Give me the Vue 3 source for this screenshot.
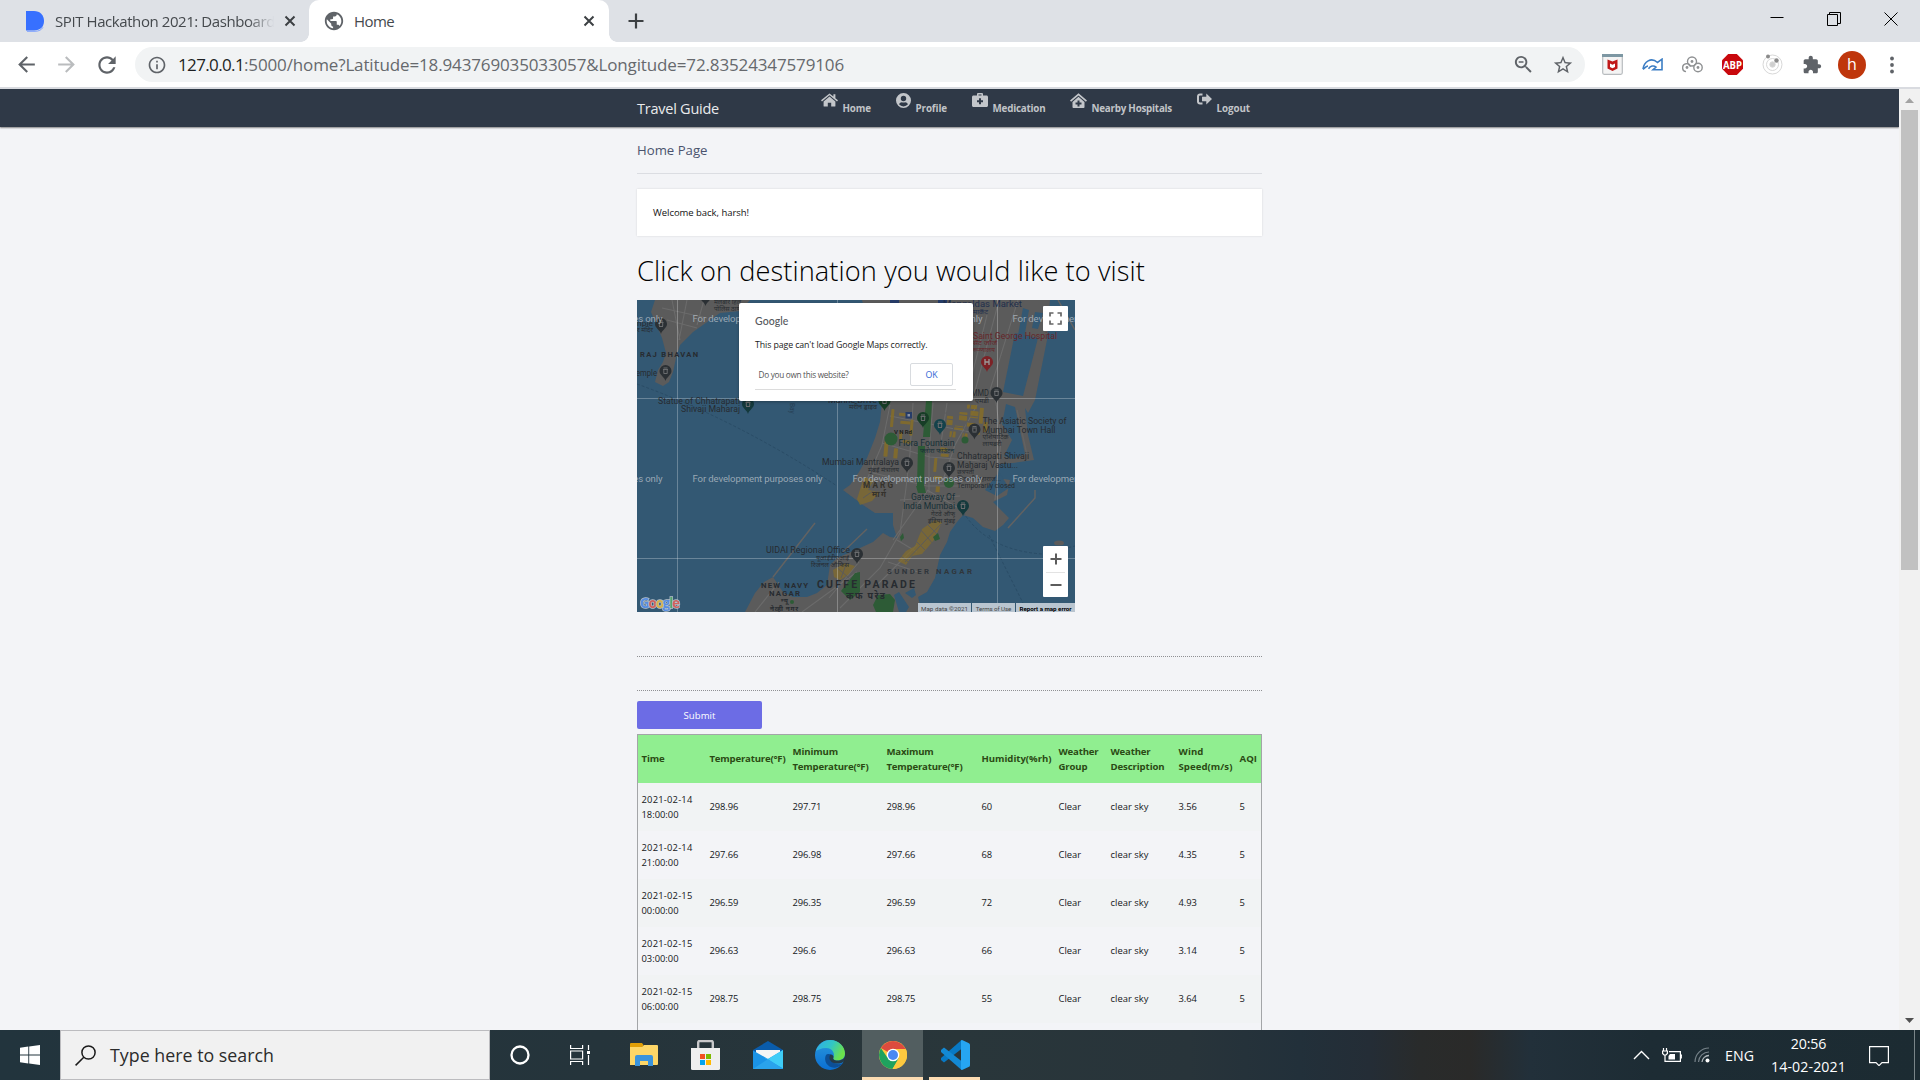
<script setup>
// Spreads a label's letters so that it takes the given width in pixels.
const fit = (el, { value }) => {
  if (!value) return
  el.style.letterSpacing = '0px'
  const count = el.textContent.trim().length
  const natural = el.getBoundingClientRect().width
  el.style.letterSpacing = `${(value - natural) / count}px`
}
const vFit = { mounted: fit, updated: fit }

const icons = {
  back: 'M20 11H7.83l5.59-5.59L12 4l-8 8 8 8 1.41-1.41L7.83 13H20v-2z',
  forward: 'M4 11h12.17l-5.59-5.59L12 4l8 8-8 8-1.41-1.41L16.17 13H4v-2z',
  reload: 'M17.65 6.35C16.2 4.9 14.21 4 12 4c-4.42 0-7.99 3.58-7.99 8s3.57 8 7.99 8c3.73 0 6.84-2.55 7.73-6h-2.08c-.82 2.33-3.04 4-5.65 4-3.31 0-6-2.69-6-6s2.69-6 6-6c1.66 0 3.14.69 4.22 1.78L13 11h7V4l-2.35 2.35z',
  info: 'M11 7h2v2h-2zm0 4h2v6h-2zm1-9C6.48 2 2 6.48 2 12s4.48 10 10 10 10-4.48 10-10S17.52 2 12 2zm0 18c-4.41 0-8-3.59-8-8s3.59-8 8-8 8 3.59 8 8-3.59 8-8 8z',
  globe: 'M12 2C6.48 2 2 6.48 2 12s4.48 10 10 10 10-4.48 10-10S17.52 2 12 2zm-1 17.93c-3.95-.49-7-3.85-7-7.93 0-.62.08-1.21.21-1.79L9 15v1c0 1.1.9 2 2 2v1.93zm6.9-2.54c-.26-.81-1-1.39-1.9-1.39h-1v-3c0-.55-.45-1-1-1H8v-2h2c.55 0 1-.45 1-1V7h2c1.1 0 2-.9 2-2v-.41c2.93 1.19 5 4.06 5 7.41 0 2.08-.8 3.97-2.1 5.39z',
  zoomOut: 'M15.5 14h-.79l-.28-.27C15.41 12.59 16 11.11 16 9.5 16 5.91 13.09 3 9.5 3S3 5.91 3 9.5 5.91 16 9.5 16c1.61 0 3.09-.59 4.23-1.57l.27.28v.79l5 4.99L20.49 19l-4.99-5zm-6 0C7.01 14 5 11.99 5 9.5S7.01 5 9.5 5 14 7.01 14 9.5 11.99 14 9.5 14zM7 8.6h5v1.6H7z',
  star: 'M22 9.24l-7.19-.62L12 2 9.19 8.63 2 9.24l5.46 4.73L5.82 21 12 17.27 18.18 21l-1.63-7.03L22 9.24zM12 15.4l-3.76 2.27 1-4.28-3.32-2.88 4.38-.38L12 6.1l1.71 4.04 4.38.38-3.32 2.88 1 4.28L12 15.4z',
  puzzle: 'M20.5 11H19V7c0-1.1-.9-2-2-2h-4V3.5C13 2.12 11.88 1 10.5 1S8 2.12 8 3.5V5H4c-1.1 0-1.99.9-1.99 2v3.8H3.5c1.49 0 2.7 1.21 2.7 2.7s-1.21 2.7-2.7 2.7H2V20c0 1.1.9 2 2 2h3.8v-1.5c0-1.49 1.21-2.7 2.7-2.7 1.49 0 2.7 1.21 2.7 2.7V22H17c1.1 0 2-.9 2-2v-4h1.5c1.38 0 2.5-1.12 2.5-2.5S21.88 11 20.5 11z',
}

const nav = [
  { label: 'Home', w: 28.5, iw: 17, d: 'M8.5 3.6 2.6 8.5V13c0 .4.2.6.6.6h3.6V9.8h3.4v3.8h3.6c.4 0 .6-.2.6-.6V8.5zM8.5.4 0 7.3l1 1.2 7.5-6.2L16 8.5l1-1.2-2.6-2.1V1.2h-2v2.3z' },
  { label: 'Profile', w: 31.5, iw: 15, d: 'M7.5 0a7.5 7.5 0 1 0 0 15 7.5 7.5 0 0 0 0-15zm0 2.8a2.7 2.7 0 1 1 0 5.4 2.7 2.7 0 0 1 0-5.4zM3 11.3c.6-1.4 1.7-2.1 2.8-2.1.5.2 1.1.3 1.7.3s1.2-.1 1.7-.3c1.1 0 2.2.7 2.8 2.1a5.9 5.9 0 0 1-9 0z' },
  { label: 'Medication', w: 53, iw: 16, d: 'M5 2.5V1.2C5 .5 5.5 0 6.2 0h3.6c.7 0 1.2.5 1.2 1.2v1.3h3.5c.8 0 1.5.7 1.5 1.5v8.5c0 .8-.7 1.5-1.5 1.5h-13C.7 14 0 13.3 0 12.5V4c0-.8.7-1.5 1.5-1.5zm1.5 0h3v-1h-3zM7 5.2v2H5v2h2v2h2v-2h2v-2H9v-2z' },
  { label: 'Nearby Hospitals', w: 80.5, iw: 16.5, d: 'M8.5 3.8 2.5 8.9v5.2c0 .5.3.9.8.9h10.4c.5 0 .8-.4.8-.9V8.9zM7.5 7.5h2v2h2v2h-2v2h-2v-2h-2v-2h2zM8.5.3 0 7.6l1.1 1.2 7.4-6.4 7.4 6.4L17 7.6z' },
  { label: 'Logout', w: 33.5, iw: 15, d: 'M5.5 1.5H3C1.3 1.5 0 2.8 0 4.3v5.4c0 1.5 1.3 2.8 3 2.8h2.5v-2H3c-.6 0-1-.4-1-.9V4.4c0-.5.4-.9 1-.9h2.5zM9.3 1.5 15 7l-5.7 5.5V9.2H5V4.8h4.3z' },
]

const cols = [68, 83, 94, 95, 77, 52, 68, 61, 25]
const heads = [
  [['Time', 23]],
  [['Temperature(°F)', 76]],
  [['Minimum', 45.5], ['Temperature(°F)', 76]],
  [['Maximum', 47], ['Temperature(°F)', 76]],
  [['Humidity(%rh)', 70]],
  [['Weather', 40], ['Group', 29]],
  [['Weather', 40], ['Description', 54]],
  [['Wind', 25], ['Speed(m/s)', 54]],
  [['AQI', 17.5]],
]
const num = (s) => [[s, s.replace('.', '').length * 5.25 + (s.includes('.') ? 2.6 : 0)]]
const row = (day, time, t, lo, hi, hum, wind) => [
  [[day, 51], [time, 37]],
  num(t), num(lo), num(hi), num(hum), [['Clear', 22.5]], [['clear sky', 38]], num(wind), num('5'),
]
const rows = [
  row('2021-02-14', '18:00:00', '298.96', '297.71', '298.96', '60', '3.56'),
  row('2021-02-14', '21:00:00', '297.66', '296.98', '297.66', '68', '4.35'),
  row('2021-02-15', '00:00:00', '296.59', '296.35', '296.59', '72', '4.93'),
  row('2021-02-15', '03:00:00', '296.63', '296.6', '296.63', '66', '3.14'),
  row('2021-02-15', '06:00:00', '298.75', '298.75', '298.75', '55', '3.64'),
]

// Map labels: text, x, baseline, width, colour, size, weight
const ink = '#272b30'
const labels = [
  ['RAJ BHAVAN', 3, 57, 58, ink, 7.6, 700],
  ['nple', 0, 26, 16, ink, 8, 400],
  ['emple', -1, 75.5, 21, ink, 8.5, 400],
  ['र मंदिर', 0, 32, 16, ink, 6, 400],
  ['मलबार हिल', 77, 4, 27, ink, 6, 400],
  ['पोलिस ठाणे', 77, 11, 27, ink, 6, 400],
  ['Statue of Chhatrapati', 21, 103.5, 82, ink, 8.6, 400],
  ['Shivaji Maharaj', 44, 112, 59, ink, 8.6, 400],
  ['Marine Drive', 191, 103, 49, ink, 8, 400],
  ['मरीन ड्राइव', 212, 109, 28, ink, 6.5, 400],
  ['Mangaldas Market', 306, 7, 79, '#222f4c', 8.6, 400],
  ['मार्केट', 336, 13.5, 15, '#222f4c', 6, 400],
  ['Saint George Hospital', 336, 38.5, 84, '#65262a', 8.4, 400],
  ['सेंट जॉर्ज', 336, 45, 24, '#65262a', 6, 400],
  ['रूग्णालय', 336, 51.5, 22, '#65262a', 6, 400],
  ['MMD', 334, 96, 18, ink, 8.6, 400],
  ['एमडी', 338, 103, 14, ink, 6.5, 400],
  ['V N Rd', 257, 134, 18, '#1f1f1f', 6, 700],
  ['The Asiatic Society of', 345.5, 124, 84, ink, 8.6, 400],
  ['Mumbai Town Hall', 345.5, 132.5, 73, ink, 8.6, 400],
  ['एशियाटिक', 345.5, 139, 26, ink, 6, 400],
  ['लायब्ररी', 345.5, 146, 19, ink, 6, 400],
  ['Flora Fountain', 261.5, 145.5, 56, '#162f36', 8.6, 400],
  ['फ्लोरा फाउंटन', 283, 152.5, 34, '#162f36', 6, 400],
  ['Mumbai Mantralaya', 185, 165, 77, ink, 8.6, 400],
  ['मुंबई मंत्रालय', 231, 172, 31, ink, 6, 400],
  ['Chhatrapati Shivaji', 320, 158.5, 72, ink, 8.6, 400],
  ['Maharaj Vastu...', 320, 167.5, 61, ink, 8.6, 400],
  ['छत्रपती', 320, 173.5, 17, ink, 5.5, 400],
  ['शिवाजी महाराज...', 320, 181, 44, ink, 5.5, 400],
  ['Temporarily closed', 320, 188, 58, ink, 7, 400],
  ['MARG', 226, 187.5, 30, '#35322c', 8.2, 700],
  ['मार्ग', 235, 197, 14, '#35322c', 8, 700],
  ['Gateway Of', 274, 200, 44, '#162f36', 8.6, 400],
  ['India Mumbai', 266, 209, 52, '#162f36', 8.6, 400],
  ['गेटवे ऑफ', 294, 215.5, 24, ink, 6.5, 400],
  ['इंडिया मुंबई', 291, 222.5, 27, ink, 6.5, 400],
  ['UIDAI Regional Office', 129, 253, 84, ink, 8.6, 400],
  ['यूआईडीएआई', 179, 260, 33, ink, 6, 400],
  ['रिजनल ऑफिस', 174, 267, 38, ink, 6, 400],
  ['NEW NAVY', 124, 287.5, 47, ink, 7.8, 700],
  ['NAGAR', 132, 296, 31, ink, 7.8, 700],
  ['न्यू', 144, 303, 7, ink, 6.5, 700],
  ['नेव्ही नगर', 133, 310.5, 28, ink, 6.5, 700],
  ['CUFFE PARADE', 180, 288, 98, ink, 10.5, 700],
  ['कफ परेड', 209, 299, 39, ink, 9, 700],
  ['SUNDER NAGAR', 250, 273.5, 85, '#30363b', 7.8, 700],
]
const pins = [
  [24, 24, '#2b3034'], [28.5, 71, '#2b3034'], [68.5, -4, '#2b3034'], [111, 104, '#14393c'],
  [247.5, 101, '#173d26'], [286, 118, '#173d26'], [303, 125, '#14424b'], [337.5, 129.5, '#2b3034'],
  [350, 62, '#7d2226'], [359.5, 93, '#2b3034'], [270, 163, '#2b3034'], [312, 168, '#2b3034'],
  [326, 206, '#14393c'], [220, 254, '#2b3034'],
]
const yellow = [
  [260, 116, 10, 3], [252, 113, 3, 18], [262, 124, 10, 3], [272, 122, 3, 16], [258, 152, 4, 10], [248, 145, 4, 16],
  [266, 143, 8, 3], [327, 102, 10, 4], [320, 110, 8, 9], [331, 108, 8, 7], [340, 104, 4, 16], [316, 124, 9, 4],
  [328, 120, 9, 4], [312, 130, 6, 6], [299, 158, 3, 14], [305, 153, 8, 3], [304, 147, 7, 4], [300, 176, 8, 3],
  [308, 115, 6, 9], [345, 118, 4, 10], [325, 131, 5, 5], [303, 186, 4, 6], [262, 135, 3, 8], [336, 128, 6, 3],
]
const watermark = [-104.5, 55.5, 215.5, 375.5]
</script>

<template>
  <div class="screen">
    <header class="tabs">
      <div class="tab first">
        <svg class="fav" width="20" height="21" viewBox="0 0 20 21"><path d="M1 0h8c6 0 10 4 10 10s-4 9.500-10 9.500H1z" fill="#3770ff" /><path d="M2 20.300h8c4 0 6.500-1.500 8-4" fill="none" stroke="#7ea2ff" /></svg>
        <span class="tab-title faded"><span v-fit="220">SPIT Hackathon 2021: Dashboard</span></span>
        <svg class="x" width="12" height="12" viewBox="0 0 12 12"><path d="M1.500 1.500l9 9m0-9l-9 9" /></svg>
      </div>
      <div class="tab active">
        <svg width="22" height="22" viewBox="0 0 24 24" fill="#5f6368"><path :d="icons.globe" /></svg>
        <span class="tab-title"><span v-fit="40">Home</span></span>
        <svg class="x" width="12" height="12" viewBox="0 0 12 12"><path d="M1.500 1.500l9 9m0-9l-9 9" /></svg>
      </div>
      <svg class="plus" width="16" height="16" viewBox="0 0 16 16"><path d="M8 .5v15M.5 8h15" stroke="#3c4043" stroke-width="2.200" /></svg>
      <div class="win">
        <svg width="14" height="14"><path d="M.5 5.500h13" stroke="#000" /></svg>
        <svg width="14" height="14"><path d="M.5 2.500h10v11h-10zM2.500 2V.5h11v11H11" fill="none" stroke="#000" /></svg>
        <svg width="14" height="14"><path d="M.5.5l13 13m0-13l-13 13" stroke="#000" fill="none" /></svg>
      </div>
    </header>

    <div class="toolbar">
      <div class="nav-buttons">
        <svg width="25" height="25" viewBox="0 0 24 24" fill="#5f6368"><path :d="icons.back" /></svg>
        <svg width="25" height="25" viewBox="0 0 24 24" fill="#babcbe"><path :d="icons.forward" /></svg>
        <svg width="26" height="26" viewBox="0 0 24 24" fill="#5f6368"><path :d="icons.reload" /></svg>
      </div>
      <div class="omnibox">
        <svg width="20" height="20" viewBox="0 0 24 24" fill="#5f6368"><path :d="icons.info" /></svg>
        <span class="url"><span v-fit="66" class="host">127.0.0.1</span><span v-fit="600">:5000/home?Latitude=18.943769035033057&amp;Longitude=72.83524347579106</span></span>
        <div class="cell"><svg width="23" height="23" viewBox="0 0 24 24" fill="#5f6368"><path :d="icons.zoomOut" /></svg></div>
        <div class="cell"><svg width="22" height="22" viewBox="0 0 24 24" fill="#5f6368"><path :d="icons.star" /></svg></div>
      </div>
      <div class="exts">
        <div class="cell"><svg width="21" height="21" viewBox="0 0 21 21"><rect x=".7" y=".7" width="19.600" height="19.600" rx="1.500" fill="#f4f4f4" stroke="#b8bcbf" stroke-width="1.200" /><path d="M0 0h21v3H0z" fill="#7d97a3" /><path d="M5.500 5.500l5 2 5-2v9l-5 2.500-5-2.500z" fill="#c01818" /><path d="M8 9.500l2.500 1.300L13 9.500V13l-2.500 1.200L8 13z" fill="#fff" /></svg></div>
        <div class="cell"><svg width="21" height="13" viewBox="0 0 21 13" fill="none" stroke="#3b7dc4" stroke-width="1.600"><path d="M1 11.300C3 9.500 4.500 8 6 8M1 11C2 4 9-1.500 15.500 4.500L20 1.200v10.600h-9l3-2.800C11.500 7 8.500 8 6.500 10.800" /></svg></div>
        <div class="cell"><svg width="21" height="17" viewBox="0 0 21 17" fill="none" stroke="#8f9193" stroke-width="1.400"><circle cx="10" cy="5.500" r="4.500" /><circle cx="16" cy="11.500" r="4.200" /><path d="M4 15.600a4 4 0 1 1 4.500-5" /><g fill="#8f9193" stroke="none"><circle cx="10" cy="5.500" r="1.400" /><circle cx="16" cy="11.500" r="1.400" /><circle cx="5" cy="11.500" r="1.400" /></g></svg></div>
        <div class="cell"><svg width="21" height="21" viewBox="0 0 21 21"><path d="M6.200 0h8.600L21 6.200v8.600L14.800 21H6.200L0 14.800V6.200z" fill="#c9080d" /><text x="10.500" y="14.500" text-anchor="middle" textLength="19" lengthAdjust="spacingAndGlyphs" class="abp">ABP</text></svg></div>
        <div class="cell"><svg width="21" height="21" viewBox="0 0 21 21" fill="none" stroke="#d8d8d8"><circle cx="10.500" cy="10.500" r="9.500" /><circle cx="10.500" cy="10.500" r="6" /><circle cx="10.500" cy="10.500" r="2.700" fill="#cfcfcf" /><circle cx="6" cy="2.500" r="2" fill="#8a8a8a" stroke="none" /><circle cx="14.500" cy="6.500" r="2.200" fill="#8a8a8a" stroke="none" /></svg></div>
        <div class="cell"><svg width="20" height="20" viewBox="0 0 24 24" fill="#5f6368"><path :d="icons.puzzle" /></svg></div>
        <div class="cell"><span class="avatar">h</span></div>
        <div class="cell"><svg width="4" height="18" viewBox="0 0 4 18" fill="#5f6368"><circle cx="2" cy="2.500" r="1.900" /><circle cx="2" cy="9" r="1.900" /><circle cx="2" cy="15.500" r="1.900" /></svg></div>
      </div>
    </div>

    <div class="viewport">
      <div class="page">
        <nav class="navtop">
          <div class="wrap nav-row">
            <h1><span v-fit="82">Travel Guide</span></h1>
            <a v-for="n in nav" :key="n.label">
              <svg :width="n.iw" height="15" fill="#c3c6ca" fill-rule="evenodd"><path :d="n.d" /></svg>
              <span v-fit="n.w">{{ n.label }}</span>
            </a>
          </div>
        </nav>
        <main class="wrap">
          <h2><span v-fit="70.500">Home Page</span></h2>
          <p class="welcome"><span v-fit="96">Welcome back, harsh!</span></p>
          <h3><span v-fit="508">Click on destination you would like to visit</span></h3>

          <div class="map">
            <svg class="tiles" width="438" height="312" viewBox="0 0 438 312">
              <rect width="438" height="312" fill="#335873" />
              <g fill="#5b5b5b">
                <path d="M18 0l-4 12 5 12 6 14 4 15-3 9-5 8-3 12 8 4 6-4 4-10 3-14 4-13 13-13 17-12 10-7 20-2 10-11z" />
                <path d="M225 0H413L410 40 398 100 391 113 388 108 391 135 397 160 376 163 362 164 360 178 373 180 370 195 356 202 372 218 366 225 358 231 346 227 336 218 326 215 320 222 313 232 310 242 303 255 298 278 290 292 281 297 285 312H108L118 293 127 282 136 277 146 292 156 297 170 297 180 293 190 285 193 265 200 258 223 248 236 242 246 233 253 237 260 238 256 225 256 213 238 213 226 205 206 190 213 185 222 172 230 158 238 138 243 122 245 103 240 60z" />
              </g>
              <g fill="#335873">
                <path d="M378 33l23 5-15 58-20-4zM386 8l6 2-10 58-7-1zM398 12l8 1-5 16-6-1zM369 104l9 3 10 47-12 5-9-3 8-16-10-16zM257 295l5-3 10 15-3 5h-7zM268 293l9-5 2 7-4 3zM362 172l-14 18 12 6 12-8z" />
              </g>
              <path d="M421 0l17 30M136 277l42-54M206 252l24-23M371 228l27-30v-8M380 110l10 45" fill="none" stroke="#626262" stroke-width="1.500" />
              <ellipse cx="422" cy="243" rx="5" ry="2.500" fill="#5b5b5b" />
              <path d="M0 84Q100 120 200 186M326 212Q350 250 405 254L438 246M352 235l38 76" fill="none" stroke="#2a4c66" stroke-dasharray="3 2" />
              <g fill="none" stroke="#6b6b6b" stroke-width="1.100">
                <path d="M253 105l-8 40-14 32-6 12M276 103l-3 50-4 35-6 45-20 35-40 40M296 103l-4 50v40M253 116l40 8 50 10M245 143l48 14 50 4M232 172l58 14 38 0M263 200l60-4M340 105l-22 40-12 35M290 190l35 20M310 103l-6 40M256 240l35-50M222 262l-30 36M118 312l24-30M260 240l20 12M251 262l30 10M362 0l-25 95M350 15l-15 60M381 0l-28 90M358 95l6 45-6 60M240 285l40-40M165 312l55-40M25 8l45 10M30 20l30 8M35 0l8 40M50 0l-8 40M67 0l-7 25" />
              </g>
              <g fill="#846d29" opacity=".88">
                <rect v-for="(r, i) in yellow" :key="i" :x="r[0]" :y="r[1]" :width="r[2]" :height="r[3]" transform="rotate(5 300 140)" rx=".5" />
                <path d="M285 229l13-9 7 2-8 18-12 14-10 2-6 9-8-4 8-10 9-5zM227 177l10 3-6 10 12 2-8 9-12 4-3-6zM196 270l12-7 10 3-7 9-8 5-6-3z" opacity=".8" />
              </g>
              <g stroke="#5b5b5b" stroke-width="1" fill="none"><path d="M268 262l36-38M282 228l16 18M276 238l14 14M290 224l12 12M264 256l12 10M308 113l34 4M310 119l32 4M312 126l30 4M322 104l-8 36M334 104l-8 36M226 198l20-14M226 184l14 8M198 266l14 12M210 262l-6 16" /></g>
              <g fill="#2d5b36">
                <circle cx="254" cy="139" r="6.500" /><path d="M289 101h6l-2 36h-7zM281 146h7l-1 40h-7zM279 186l8-1 2 8h-8zM241 295l12-1 5 6-2 12h-17l-3-7zM204 291l14-18 5-1v20l-10 8z" /><circle cx="328" cy="140" r="3.500" /><circle cx="312" cy="183" r="5" /><path d="M296 237l5-4 2 6-5 2zM263 237l3-4 1 5-3 3z" /><circle cx="155" cy="302" r="2" />
              </g>
              <g fill="#263c68"><rect x="268.500" y="112" width="6.500" height="6.500" /><rect x="253" y="0" width="9" height="4" /><rect x="301" y="0" width="9" height="4" /></g>
              <path d="M270.500 114h2.500v2.500h-2.500z" fill="#8a93a5" />
              <path d="M40.500 0v312M200.500 0v312M360.500 0v312M0 98.500h438M0 258.500h438" stroke="#fff" stroke-opacity=".27" />
              <g v-for="(p, i) in pins" :key="'p' + i" :transform="`translate(${p[0]} ${p[1]})`">
                <path d="M0 10C-1 6-6 4-6 0a6 6 0 1 1 12 0c0 4-5 6-6 10z" :fill="p[2]" />
                <path v-if="p[2] === '#7d2226'" d="M-2-3v6M2-3v6M-2 0h4" stroke="#9b9b9b" stroke-width="1.300" />
                <path v-else d="M-2.500-1.500h5M-2 2.500h4M-1.700-1v3M1.700-1v3M-2-3h4" stroke="#6a6c6e" stroke-width="1" />
              </g>
              <g class="labels">
                <text v-for="(l, i) in labels" :key="'l' + i" :x="l[1]" :y="l[2]" :textLength="l[3]" :fill="l[4]" :font-size="l[5]" :font-weight="l[6]" :lengthAdjust="l[6] === 700 ? 'spacing' : 'spacingAndGlyphs'">{{ l[0] }}</text>
                <text x="0" y="0" transform="translate(153 103) rotate(90)" font-size="6.500" fill="#263f54">Bay</text>
              </g>
              <g class="marks">
                <template v-for="y in [22, 182]" :key="y">
                  <text v-for="x in watermark" :key="x" :x="x" :y="y" textLength="130">For development purposes only</text>
                </template>
              </g>
              <text x="3" y="307.500" class="glogo" textLength="40"><tspan fill="#5b93ee">G</tspan><tspan fill="#e2635b">o</tspan><tspan fill="#e9bd45">o</tspan><tspan fill="#5b93ee">g</tspan><tspan fill="#57ad6c">l</tspan><tspan fill="#e2635b">e</tspan></text>
            </svg>
            <div class="dialog">
              <div class="g"><span v-fit="33.500">Google</span></div>
              <div class="msg"><span v-fit="172.500">This page can't load Google Maps correctly.</span></div>
              <div class="own"><span v-fit="90">Do you own this website?</span><button><span v-fit="12">OK</span></button></div>
            </div>
            <div class="full"><svg width="13" height="13" fill="none" stroke="#666" stroke-width="1.700"><path d="M1 4.500V1h3.500M8.500 1H12v3.500M12 8.500V12H8.500M4.500 12H1V8.500" /></svg></div>
            <div class="zoom">
              <div><svg width="12" height="12"><path d="M6 .5v11M.5 6h11" stroke="#5c5c5c" stroke-width="2" /></svg></div>
              <div><svg width="12" height="12"><path d="M.5 6h11" stroke="#5c5c5c" stroke-width="2" /></svg></div>
            </div>
            <div class="credits">
              <div class="c1"><span v-fit="47">Map data ©2021</span></div>
              <div class="c2"><span v-fit="35.500">Terms of Use</span></div>
              <div class="c3"><span v-fit="52">Report a map error</span></div>
            </div>
          </div>

          <div class="rule r1"></div>
          <div class="rule r2"></div>
          <button class="submit"><span v-fit="32">Submit</span></button>

          <table>
            <colgroup><col v-for="(c, i) in cols" :key="i" :style="{ width: c + 'px' }"></colgroup>
            <thead>
              <tr><th v-for="(h, i) in heads" :key="i"><div v-for="l in h" :key="l[0]"><span v-fit="l[1]">{{ l[0] }}</span></div></th></tr>
            </thead>
            <tbody>
              <tr v-for="(r, i) in rows" :key="i"><td v-for="(c, j) in r" :key="j"><div v-for="l in c" :key="l[0]"><span v-fit="l[1]">{{ l[0] }}</span></div></td></tr>
              <tr class="next"><td colspan="9"></td></tr>
            </tbody>
          </table>
        </main>
      </div>
      <div class="scrollbar">
        <svg width="9" height="5"><path d="M4.500 0L9 5H0z" fill="#a3a3a3" /></svg>
        <div class="thumb"></div>
        <svg class="down" width="9" height="5"><path d="M4.500 5L9 0H0z" fill="#505050" /></svg>
      </div>
    </div>

    <footer class="taskbar">
      <div class="start"><svg width="20" height="20" viewBox="0 0 20 20" fill="#fff"><path d="M0 2.700L8.300 1.500v8H0zM9.200 1.400L20 0v9.500H9.200zM0 10.400h8.300v8.100L0 17.300zM9.200 10.400H20V20L9.200 18.600z" /></svg></div>
      <div class="search">
        <svg width="21" height="21" viewBox="0 0 21 21" fill="none" stroke="#1b1b1b" stroke-width="1.500"><circle cx="13.500" cy="7.500" r="6.600" /><path d="M8.800 12.200L.6 20.400" /></svg>
        <span v-fit="164">Type here to search</span>
      </div>
      <div class="apps">
        <div class="app"><svg width="20" height="20"><circle cx="10" cy="10" r="8.500" fill="none" stroke="#fff" stroke-width="2.300" /></svg></div>
        <div class="app"><svg width="20" height="20" fill="none" stroke="#fff" stroke-width="1.200"><path d="M.6 0v3.500h12V0M.6 20v-3.500h12V20M.6 6h12v8H.6zM18.500 0v5M18.500 10v10" /><path d="M17 6h3v3h-3z" fill="#fff" stroke="none" /></svg></div>
        <div class="app"><svg width="28" height="24" viewBox="0 0 28 24"><path d="M0 1a1 1 0 0 1 1-1h11l1.500 2L12 5H0z" fill="#e09e06" /><path d="M0 4h12l2-2h13a1 1 0 0 1 1 1v18a1 1 0 0 1-1 1H0z" fill="#fdd667" /><path d="M5 23V14a2 2 0 0 1 2-2h14a2 2 0 0 1 2 2v9h-5v-5h-8v5z" fill="#3a93dc" /></svg></div>
        <div class="app"><svg width="29" height="30" viewBox="0 0 29 30"><path d="M7.200 10V2.500A1.500 1.500 0 0 1 8.700 1h11.600a1.500 1.500 0 0 1 1.500 1.500V10" fill="none" stroke="#c9c9cb" stroke-width="2.400" /><path d="M0 8h29v20.500a1.500 1.500 0 0 1-1.500 1.500h-26A1.500 1.500 0 0 1 0 28.500z" fill="#efefef" /><path d="M9 14h5v5H9z" fill="#f25022" /><path d="M15 14h5v5h-5z" fill="#7fba00" /><path d="M9 20h5v5H9z" fill="#00a4ef" /><path d="M15 20h5v5h-5z" fill="#ffb900" /></svg></div>
        <div class="app"><svg width="30" height="28" viewBox="0 0 30 28"><path d="M0 9L15 0l15 9v6H0z" fill="#0a5cab" /><path d="M3 9h24v12H3z" fill="#f5f5f5" /><path d="M0 9.500L15 18 30 9v19H0z" fill="#1b93e6" /><path d="M30 9v18.500L11 16.500l4 1.500z" fill="#3fcdf7" /><path d="M0 28l15-10 15 10z" fill="#2aa3ec" /></svg></div>
        <div class="app">
          <svg width="30" height="30" viewBox="0 0 30 30">
            <defs><linearGradient id="eg" x1="0" y1="0" x2="1" y2=".4"><stop offset=".1" stop-color="#2fb0e6" /><stop offset=".55" stop-color="#32c6c4" /><stop offset="1" stop-color="#6be14c" /></linearGradient><linearGradient id="eb" x1="0" y1="0" x2="0" y2="1"><stop offset="0" stop-color="#2a97dc" /><stop offset="1" stop-color="#0a6fd2" /></linearGradient></defs>
            <circle cx="15" cy="15" r="15" fill="url(#eb)" />
            <path d="M1 11C3 4 9 0 15 0c9 0 15 6.500 15 13.500 0 5-4 7-7.500 7-3.500 0-5-1.500-4-3C20 14 18 8 11 8 6 8 3 10 1 11z" fill="url(#eg)" />
            <path d="M11 15c-3 6 2 14 10 12.500 3-.5 6-2.500 7-4.500-3 2-8 1.500-11-1.500-2-2-3-4-1-7-2-1-4-.5-5 .5z" fill="#0c4f96" />
            <path d="M15.500 14.500c-2 3-1 6 2 8 3 1.500 8 1.500 10.500-.500l2-1V15c0 4-4 5.500-7.500 5.500-3.500 0-5-1.500-4-3 .5-1.500-1.500-3.500-3-3z" fill="#27343a" opacity=".9" />
          </svg>
        </div>
        <div class="app chrome"><svg width="28" height="28" viewBox="0 0 28 28"><circle cx="14" cy="14" r="14" fill="#fdc93f" /><path d="M14 14L1.900 7A14 14 0 0 1 26.100 7L27 8H14z" fill="#dd4b3e" /><path d="M1.900 7A14 14 0 0 0 13.500 28L19.500 17.500 14 14 8 16z" fill="#1fa25e" /><path d="M27 8.500H14l6 9L13.500 28A14 14 0 0 0 27 8.500z" fill="#fdc93f" /><circle cx="14" cy="14" r="6.300" fill="#fff" /><circle cx="14" cy="14" r="5" fill="#4a89f3" /></svg></div>
        <div class="app code"><svg width="30" height="30" viewBox="0 0 30 30"><path d="M22 0v8.500L4 22.500 1 20v-2L21 .5z" fill="#0879c4" /><path d="M22 30v-8.500L4 7.500 1 10v2l20 17.500z" fill="#1389d4" /><path d="M22 0l6.500 3a2 2 0 0 1 1.500 2v20a2 2 0 0 1-1.500 2L22 30c-.8 0-1-1-1-1.500v-27C21 .7 21.300 0 22 0z" fill="#26a5f1" /></svg></div>
      </div>
      <div class="tray">
        <svg class="t1" width="17" height="10"><path d="M1 9l7.500-7.500L16 9" fill="none" stroke="#fff" stroke-width="1.400" /></svg>
        <svg class="t2" width="20" height="15" fill="none" stroke="#fff" stroke-width="1.200"><path d="M7 3.600h11.400v9.800H5" /><path d="M18.500 7h1.200v3.500" /><path d="M8 6h5v5.500H6.500V8z" fill="#fff" stroke="none" /><path d="M1.500 0v3M4.500 0v3M.6 3h4.800v2.500L4 7H2L.6 5.500zM3 7v6.400h2" /></svg>
        <svg class="t3" width="16" height="16" fill="none"><path d="M1 15A14 14 0 0 1 15 1M4.500 15A10.500 10.500 0 0 1 15 5" stroke="#77838a" stroke-width="1.200" /><path d="M8 15a7 7 0 0 1 7-6.500" stroke="#aeb6ba" stroke-width="1.300" /><circle cx="13.500" cy="13.500" r="2" fill="#fff" /></svg>
        <span class="t4"><span v-fit="29">ENG</span></span>
        <div class="clock"><span v-fit="35.500">20:56</span><span v-fit="75">14-02-2021</span></div>
        <svg class="t5" width="20" height="20"><path d="M.6.600h18.800v16H13l-3 3-3-3H.6z" fill="none" stroke="#fff" stroke-width="1.200" /></svg>
        <div class="peek"></div>
      </div>
    </footer>
  </div>
</template>

<style>
body { margin: 0; overflow: hidden; }
</style>

<style scoped>
* { box-sizing: border-box; }
.screen { width: 1920px; height: 1080px; display: flex; flex-direction: column; font-family: "Open Sans", "Noto Sans", sans-serif; color: #111; overflow: hidden; }
span { white-space: nowrap; }
svg { flex: none; display: block; }
h1, h2, h3, p { margin: 0; font-weight: 400; }

.tabs { height: 42px; flex: none; background: #dee1e6; display: flex; align-items: stretch; }
.tab { display: flex; align-items: center; font-size: 15px; color: #45494d; }
.tab.first { width: 309px; padding-left: 25px; }
.tab-title { flex: none; }
.faded { width: 219px; margin-left: 10px; overflow: hidden; mask-image: linear-gradient(90deg, #000 88%, transparent); }
.x { fill: none; stroke: #3c4043; stroke-width: 2; }
.first .x { margin-left: 10px; }
.tab.active { position: relative; width: 300px; background: #fff; border-radius: 10px 10px 0 0; padding: 0 14px; }
.tab.active::before, .tab.active::after { content: ""; position: absolute; bottom: 0; width: 8px; height: 8px; }
.tab.active::before { left: -8px; background: radial-gradient(circle at 0 0, transparent 7.5px, #fff 8px); }
.tab.active::after { right: -8px; background: radial-gradient(circle at 100% 0, transparent 7.5px, #fff 8px); }
.active .tab-title { margin-left: 9px; }
.active .x { margin-left: auto; }
.plus { margin: 13px 0 0 19px; }
.win { margin-left: auto; display: flex; gap: 43px; padding: 12px 22px 0 0; }

.toolbar { height: 47px; flex: none; background: #fff; border-bottom: 2px solid #d9dbe0; display: flex; align-items: center; }
.nav-buttons { width: 135px; display: flex; gap: 15px; padding-left: 14px; }
.omnibox { width: 1450px; height: 35px; border-radius: 18px; background: #f1f3f4; display: flex; align-items: center; padding: 0 2px 0 12px; }
.url { margin: 0 auto 0 11px; font-size: 17px; color: #66696d; }
.host { color: #1d1f22; }
.cell { width: 40px; display: flex; justify-content: center; align-items: center; }
.exts { display: flex; margin-left: 7px; }
.abp { font: 700 10.5px "Open Sans", sans-serif; fill: #fff; }
.avatar { width: 28px; height: 28px; border-radius: 50%; background: #bf360c; color: #fff; font-size: 16px; line-height: 27px; text-align: center; }

.viewport { height: 941px; flex: none; display: flex; background: #f3f4f7; overflow: hidden; }
.page { width: 1899px; }
.wrap { width: 625px; margin-left: 637px; }
.navtop { height: 38px; background: #2f3947; box-shadow: 0 1px 1.5px rgba(0, 0, 0, .45); }
.nav-row { height: 38px; display: flex; align-items: center; gap: 24.5px; padding: 2px 12px 0 0; }
.nav-row h1 { margin-right: auto; font-size: 14.5px; color: #eaebed; line-height: 20px; }
.nav-row a { display: flex; gap: 5px; font-size: 9.8px; font-weight: 700; color: #c1c4c8; line-height: 14px; align-items: flex-start; }
.nav-row a svg { margin-top: -9px; }
.nav-row a:last-child svg { margin-top: -10px; }

h2 { height: 47px; border-bottom: 1px solid #dbdde2; font-size: 13.2px; line-height: 47px; color: #4a536e; }
.welcome { height: 47px; margin-top: 15px; padding-left: 16px; background: #fff; box-shadow: 0 0 2px rgba(0, 0, 0, .13); font-size: 9.5px; line-height: 48px; }
h3 { height: 64px; font-size: 27.2px; line-height: 70px; color: #000; font-weight: 300; }

.map { position: relative; width: 438px; height: 312px; overflow: hidden; }
.labels { font-family: Roboto, "Noto Sans", sans-serif; }
.marks { font: 9.6px Roboto, sans-serif; fill: #b4bec6; fill-opacity: .8; }
.glogo { font: 700 13.5px "Open Sans", sans-serif; stroke: #c3ccd4; stroke-width: 1.4px; paint-order: stroke; opacity: .9; }
.dialog { position: absolute; left: 102px; top: 3px; width: 234px; height: 98px; background: #fff; border-radius: 2px; padding: 9px 17px 0 16px; box-shadow: 0 1px 3px rgba(0, 0, 0, .3); }
.g { font: 500 10.5px/18px Lato, Roboto, sans-serif; color: #55585c; }
.msg { margin-top: 8px; font-size: 8.8px; line-height: 15px; color: #222; }
.own { display: flex; align-items: center; justify-content: space-between; margin-top: 7px; padding: 3px 3px 3px 3.5px; font-size: 8.2px; color: #555; border-bottom: 1px solid #dcdcdc; height: 30px; }
.own button { width: 43px; height: 23px; padding: 0; border: 1px solid #d8dbdf; border-radius: 2px; background: #fff; color: #3367d6; font: 8.8px "Open Sans", sans-serif; }
.full, .zoom { position: absolute; left: 406px; width: 25px; background: #fff; border-radius: 1px; }
.full { top: 6px; height: 25px; display: flex; align-items: center; justify-content: center; }
.zoom { top: 246px; height: 51px; padding: 0 3px; }
.zoom div { height: 25.5px; display: flex; align-items: center; justify-content: center; }
.zoom div + div { border-top: 1px solid #e3e3e3; }
.credits { position: absolute; right: 0; bottom: 0; height: 9px; display: flex; gap: 1px; font: 6.2px/12px Roboto, sans-serif; color: #444; }
.credits div { background: #b9c5d0; height: 9px; text-align: center; overflow: hidden; }
.c1 { width: 53px; }
.c2 { width: 43px; }
.credits .c3 { width: 59px; color: #000; font-weight: 700; }

.rule { height: 1px; background: repeating-linear-gradient(90deg, #8f9093 0 1px, transparent 1px 2px); }
.r1 { margin-top: 44px; }
.r2 { margin-top: 33px; }
.submit { display: flex; align-items: center; justify-content: center; width: 125px; height: 28px; margin: 10px 0 5px; border: 0; border-radius: 2px; background: #6c6ce5; color: #fff; font: 9.6px "Open Sans", sans-serif; padding: 1px 0 0; }

table { width: 625px; table-layout: fixed; border-spacing: 0; border: 1px solid #a3a5a8; font-size: 9.4px; line-height: 15px; color: #15171a; }
th, td { height: 48px; padding: 0 0 1px 3.5px; text-align: left; vertical-align: middle; }
th { background: #90ee90; color: #2b4a14; font-weight: 700; font-size: 9.6px; }
tbody tr:nth-child(odd) { background: #f1f3f4; }
tbody tr.next { background: #f3f4f7; }
th div, td div { height: 15px; }

.scrollbar { width: 21px; background: #f1f1f1; display: flex; flex-direction: column; align-items: center; padding-top: 9px; }
.thumb { width: 17px; height: 460px; margin-top: 7px; background: #c1c1c1; }
.down { margin: auto 0 7px; }

.taskbar { height: 50px; flex: none; display: flex; background: linear-gradient(90deg, #22343d 0, #25343b 600px, #29363a 960px, #28343a 1190px, #22303a 1300px, #242d36 1370px, #292b2b 1420px, #2a2a29 1470px, #22303a 1530px, #1d2c34 1650px, #1c2b32); }
.start { width: 60px; display: flex; align-items: center; justify-content: center; }
.search { width: 430px; height: 50px; border: 1px solid #bcbcbf; background: #f1f1f1; display: flex; align-items: center; padding-left: 14px; font-size: 17.8px; color: #2b2b2b; gap: 14px; }
.apps { display: flex; }
.app { width: 62px; display: flex; align-items: center; justify-content: center; }
.app:first-child { width: 60px; }
.app:nth-child(2) { width: 60px; }
.app:nth-child(3) { width: 68px; }
.app:nth-child(4) { width: 55px; }
.app:nth-child(5) { width: 69px; }
.app:nth-child(6) { width: 56px; }
.app.chrome { width: 61px; margin-left: 4px; background: #525e60; border-bottom: 3px solid #fcdcb2; padding-top: 2px; }
.app.code { margin-left: 6px; width: 51px; border-bottom: 3px solid #fcdcb2; padding: 3px 0 0 0; }
.tray { margin-left: auto; display: flex; align-items: center; color: #fff; font-size: 14.2px; }
.t2 { margin-left: 12px; }
.t3 { margin-left: 12px; }
.t4 { margin-left: 15px; }
.clock { width: 75px; margin-left: 17px; display: flex; flex-direction: column; align-items: center; line-height: 23px; }
.t5 { margin: 2px 0 0 23px; }
.peek { width: 1px; height: 50px; margin: 0 5px 0 25px; background: #7a8589; }
</style>
